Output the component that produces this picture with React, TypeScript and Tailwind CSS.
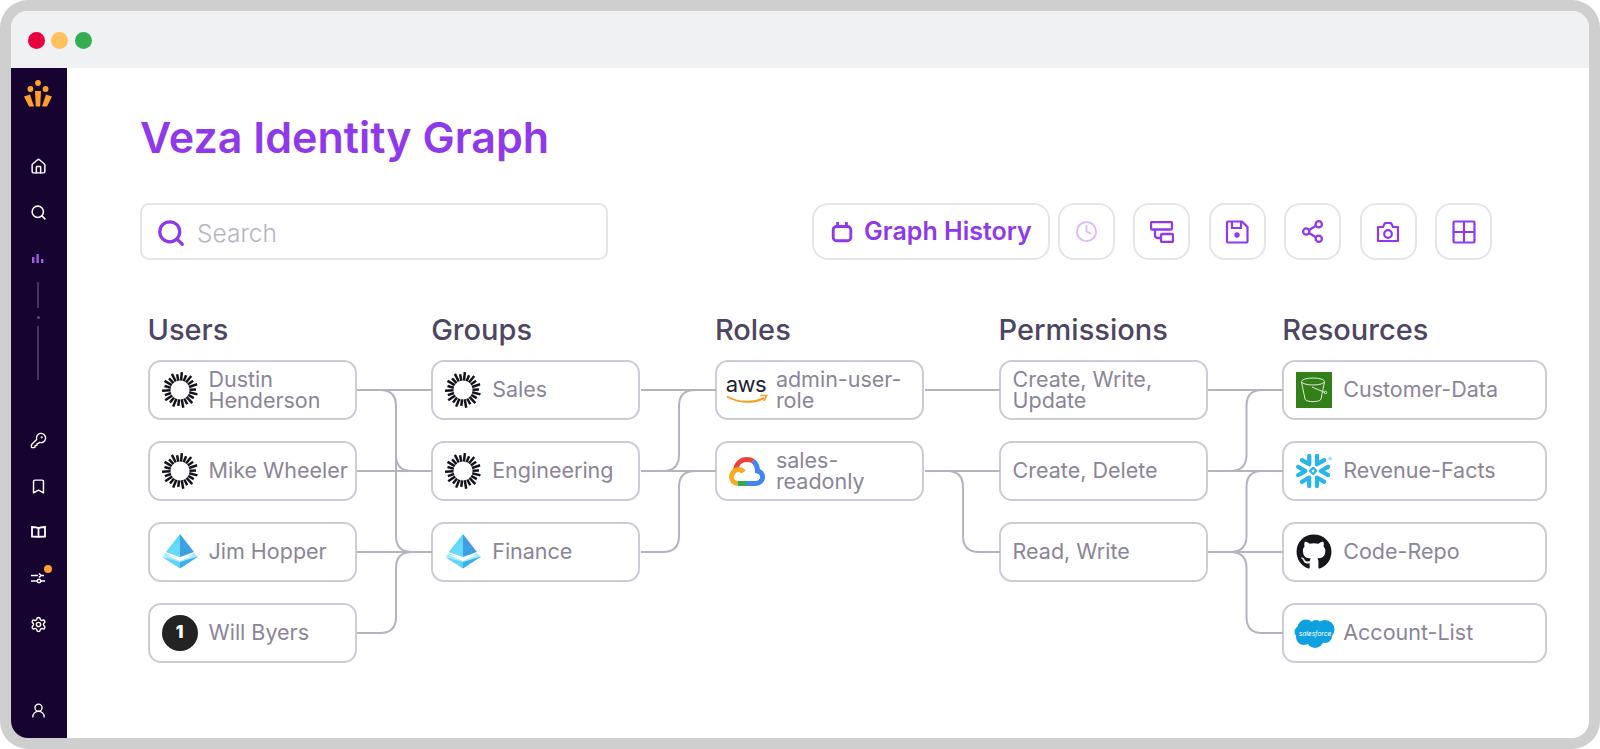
import { ReactNode } from 'react';
import { Search, Clock, Share2, House, KeyRound, Bookmark, Settings, UserRound } from 'lucide-react';
import { FaGithub } from 'react-icons/fa';
import { SiSnowflake } from 'react-icons/si';

function Sunburst() {
    const rays = Array.from({ length: 22 }, (_, i) => i);
    return (
        <svg viewBox="0 0 36 36" className="w-[36px] h-[36px]">
            {rays.map((i) => (
                <line
                    key={i}
                    x1="18"
                    y1={i % 2 === 0 ? 0 : 2}
                    x2="18"
                    y2="8.5"
                    stroke="#15131a"
                    strokeWidth="2.5"
                    transform={`rotate(${(i * 360) / 22 + 6} 18 18)`}
                />
            ))}
        </svg>
    );
}

function AzureLogo() {
    return (
        <svg viewBox="0 0 38 36" className="w-[38px] h-[36px] -mx-px">
            <polygon points="19,0 19,23 5,18" fill="#55d7fb" />
            <polygon points="19,0 33,18 19,23" fill="#3f9fe3" />
            <polygon points="19,23 5,18 11,12 19,7" fill="#6fdcfb" opacity="0.7" />
            <polygon points="2,22 5,19 19,27 33,19 37,23 19,34" fill="#a5e9fc" />
            <polygon points="19,28 37,22.5 19,34.5" fill="#38b0ec" />
            <polygon points="1,23 19,28 19,34.5" fill="#62d2f8" />
            <polygon points="5,21 19,27 33,21 19,24.5" fill="#ffffff" opacity="0.9" />
        </svg>
    );
}

function OnePassword() {
    return (
        <div className="w-[36px] h-[36px] rounded-full bg-[#222322] flex items-center justify-center text-white text-[17px] font-black">
            1
        </div>
    );
}

function AwsLogo() {
    return (
        <svg viewBox="0 0 40 30" className="w-[40px] h-[30px] -mx-[2px] overflow-visible">
            <text x="19" y="17" textAnchor="middle" fontSize="22" fontWeight="400" fill="#221f33" letterSpacing="-0.5">aws</text>
            <path d="M0 21.5 C11 28 27 28.5 37 23" fill="none" stroke="#f59e22" strokeWidth="2" />
            <path d="M33.5 20.5 L39.5 20.5 L37 26" fill="none" stroke="#f59e22" strokeWidth="1.7" />
        </svg>
    );
}

function GoogleCloud() {
    return (
        <svg viewBox="0 0 36 29" fill="none" strokeWidth="5" className="w-[36px] h-[29px]">
            <path d="M24 4 C27 6.5 28.6 10 28.5 14 C31.5 14.5 33.6 17 33.6 20 C33.6 23.5 30.5 26.5 27 26.5 H18" stroke="#4285f4" />
            <path d="M6.5 13 C7.5 6.5 12 2.5 18 2.5 C20.5 2.5 22.5 3 24 4" stroke="#e9433a" />
            <path d="M8.5 26.5 H18" stroke="#34a853" />
            <path d="M9 26.5 C5 26.5 2.5 23.5 2.5 19.8 C2.5 15.5 6 12.6 9.5 12.6 C11.5 12.6 13.4 13.6 14.5 15.2" stroke="#fba91e" />
        </svg>
    );
}

function S3Logo() {
    return (
        <svg viewBox="0 0 36 36" className="w-[36px] h-[36px]">
            <rect width="36" height="36" fill="#33801a" />
            <g fill="none" stroke="#dcebd3" strokeWidth="1">
                <ellipse cx="17" cy="9.5" rx="11.5" ry="3.5" />
                <path d="M5.5 10 L9 27 C9.5 30.5 24.5 30.5 25 27 L28.5 10" />
                <path d="M16 15 L29 20.5" />
                <circle cx="29.5" cy="20.5" r="1.2" />
            </g>
        </svg>
    );
}

function SalesforceLogo() {
    return (
        <svg viewBox="0 0 41 30" className="w-[41px] h-[30px] -mx-[3px]">
            <g fill="#0ea1e0">
                <circle cx="12" cy="10" r="8.5" />
                <circle cx="22" cy="8.5" r="6.5" />
                <circle cx="31" cy="11.5" r="9.5" />
                <circle cx="10" cy="19" r="8" />
                <circle cx="21" cy="21.5" r="8.5" />
                <circle cx="31" cy="18" r="7" />
                <circle cx="7" cy="14" r="6.5" />
            </g>
            <text x="21" y="17.5" textAnchor="middle" fontSize="6.6" fontStyle="italic" fill="#ffffff">salesforce</text>
        </svg>
    );
}

type Item = { label: string; icon?: ReactNode };

const columns: { title: string; items: Item[] }[] = [
    {
        title: 'Users',
        items: [
            { label: 'Dustin Henderson', icon: <Sunburst /> },
            { label: 'Mike Wheeler', icon: <Sunburst /> },
            { label: 'Jim Hopper', icon: <AzureLogo /> },
            { label: 'Will Byers', icon: <OnePassword /> },
        ],
    },
    {
        title: 'Groups',
        items: [
            { label: 'Sales', icon: <Sunburst /> },
            { label: 'Engineering', icon: <Sunburst /> },
            { label: 'Finance', icon: <AzureLogo /> },
        ],
    },
    {
        title: 'Roles',
        items: [
            { label: 'admin-user-role', icon: <AwsLogo /> },
            { label: 'sales-readonly', icon: <GoogleCloud /> },
        ],
    },
    {
        title: 'Permissions',
        items: [{ label: 'Create, Write, Update' }, { label: 'Create, Delete' }, { label: 'Read, Write' }],
    },
    {
        title: 'Resources',
        items: [
            { label: 'Customer-Data', icon: <S3Logo /> },
            { label: 'Revenue-Facts', icon: <SiSnowflake size={36} color="#29b5e8" /> },
            { label: 'Code-Repo', icon: <FaGithub size={36} color="#17151a" /> },
            { label: 'Account-List', icon: <SalesforceLogo /> },
        ],
    },
];

// Connector lines, in the coordinates of the card grid
const links = [
    'M209 30 H284',
    'M209 30 H232 Q248 30 248 46 V95 Q248 111 264 111 H284',
    'M248 95 V176 Q248 192 264 192 H284',
    'M209 111 H284',
    'M209 192 H284',
    'M209 273 H232 Q248 273 248 257 V208 Q248 192 264 192',
    'M493 30 H568',
    'M493 111 H568',
    'M493 111 H515 Q531 111 531 95 V46 Q531 30 547 30',
    'M493 192 H515 Q531 192 531 176 V127 Q531 111 547 111',
    'M777 30 H852',
    'M777 111 H852',
    'M777 111 H799 Q815 111 815 127 V176 Q815 192 831 192 H852',
    'M1060 30 H1135',
    'M1060 111 H1135',
    'M1060 192 H1135',
    'M1060 111 H1082 Q1098.5 111 1098.5 95 V46 Q1098.5 30 1114 30',
    'M1060 192 H1082 Q1098.5 192 1098.5 176 V127 Q1098.5 111 1114 111',
    'M1082 192 Q1098.5 192 1098.5 208 V257 Q1098.5 273 1114 273 H1135',
];

function Card({ label, icon }: Item) {
    return (
        <div className="h-[60px] w-full flex items-center gap-[11px] pl-[12px] bg-white border-2 border-[#cdcbd5] rounded-[13px]">
            {icon && <div className="shrink-0 flex items-center justify-center w-[36px]">{icon}</div>}
            <span className="text-[21.5px] leading-[21.5px] text-[#8b8598]">{label}</span>
        </div>
    );
}

function ToolButton({ children }: { children: ReactNode }) {
    return (
        <button className="w-[57px] h-[57px] flex items-center justify-center border-2 border-[#e6e5ea] rounded-[16px] text-[#9039ea]">
            {children}
        </button>
    );
}

function NavItem({ children }: { children: ReactNode }) {
    return <div className="h-[46px] w-full flex items-center justify-center text-white relative">{children}</div>;
}

export default function App() {
    return (
        <div className="w-[1600px] h-[749px] bg-white overflow-hidden font-[Inter,sans-serif]">
            <div className="w-full h-full bg-[#cfcfcf] rounded-[28px] p-[11px]">
                <div className="w-full h-full bg-white rounded-[17px] overflow-hidden flex flex-col">
                    {/* Title bar */}
                    <div className="h-[57px] shrink-0 bg-[#f0f1f3] flex items-center gap-[6.3px] pl-[17px] pt-px">
                        <div className="w-[17px] h-[17px] rounded-full bg-[#e6023f]" />
                        <div className="w-[17px] h-[17px] rounded-full bg-[#ffc15c]" />
                        <div className="w-[17px] h-[17px] rounded-full bg-[#36ad55]" />
                    </div>

                    <div className="flex flex-1 min-h-0">
                        {/* Sidebar */}
                        <div className="w-[56px] shrink-0 bg-[#170330] flex flex-col items-center pt-[12px] pb-[5px] pr-[2px]">
                            <svg viewBox="0 0 28 27" className="w-[28px] h-[27px] mb-[36px]" fill="#ff9f2e">
                                <circle cx="14" cy="3" r="2.9" />
                                <circle cx="6.4" cy="9" r="2.9" />
                                <circle cx="21.6" cy="9" r="2.9" />
                                <polygon points="11,11 17,11 16.2,26.5 11.8,26.5" />
                                <polygon points="0,16.5 6,14.5 10,26.5 5,26.5" />
                                <polygon points="28,16.5 22,14.5 18,26.5 23,26.5" />
                            </svg>
                            <NavItem><House size={17} strokeWidth={2.1} /></NavItem>
                            <NavItem><Search size={17} strokeWidth={2.2} /></NavItem>
                            <NavItem>
                                <svg viewBox="0 0 12 9" className="w-[12px] h-[9px]" fill="#9a5fe0">
                                    <rect x="0" y="3" width="2.4" height="6" />
                                    <rect x="4.5" y="0" width="2.4" height="9" />
                                    <rect x="9" y="5" width="2.4" height="4" />
                                </svg>
                            </NavItem>
                            <div className="w-[2px] h-[26px] bg-[#453558] mt-px" />
                            <div className="w-[3px] h-[3px] rounded-full bg-[#5b4c70] mt-[8px]" />
                            <div className="w-[2px] h-[54px] bg-[#453558] mt-[7px]" />
                            <div className="h-[37px] shrink-0" />
                            <NavItem><KeyRound size={17} strokeWidth={2} /></NavItem>
                            <NavItem><Bookmark size={17} strokeWidth={2.1} /></NavItem>
                            <NavItem>
                                <svg viewBox="0 0 15 12" className="w-[15px] h-[12px]" fill="none" stroke="currentColor" strokeWidth="1.8">
                                    <path d="M7.5 2.5 C6 1 3 1 1 1 V10.5 C3 10.5 6 10.5 7.5 11 C9 10.5 12 10.5 14 10.5 V1 C12 1 9 1 7.5 2.5 V11" />
                                </svg>
                            </NavItem>
                            <NavItem>
                                <svg viewBox="0 0 14 12" className="w-[14px] h-[12px]" fill="none" stroke="currentColor" strokeWidth="1.5">
                                    <path d="M0 3.5 H7 M13 3.5 H10 L8 1.5 M8 5.5 L10 3.5 M0 9 H6 M10 9 H14" />
                                    <circle cx="8" cy="9" r="1.7" />
                                </svg>
                                <div className="absolute left-[33px] top-[10px] w-[8px] h-[8px] rounded-full bg-[#ff9f2e]" />
                            </NavItem>
                            <NavItem><Settings size={17} strokeWidth={2} /></NavItem>
                            <div className="mt-auto w-full">
                                <NavItem><UserRound size={17} strokeWidth={1.9} /></NavItem>
                            </div>
                        </div>

                        {/* Main */}
                        <div className="flex-1 pt-[44px] pl-[73px]">
                            <h1 className="text-[43px] leading-[50px] font-semibold text-[#9039ea]">Veza Identity Graph</h1>

                            <div className="mt-[41px] w-[1352px] flex items-center justify-between">
                                <div className="w-[468px] h-[57px] flex items-center gap-[11px] pl-[14px] pt-[3px] border-2 border-[#e6e5ea] rounded-[9px]">
                                    <Search size={30} strokeWidth={2.6} className="text-[#9039ea]" />
                                    <span className="text-[24.5px] font-light text-[#b7b4bf]">Search</span>
                                </div>
                                <div className="flex items-center">
                                    <button className="h-[57px] w-[238px] flex items-center gap-[11px] pl-[17px] border-2 border-[#e6e5ea] rounded-[16px] text-[#9039ea] mr-[8px]">
                                        <svg viewBox="0 0 20 20" className="w-[22px] h-[22px]" fill="none" stroke="currentColor" strokeWidth="2.6">
                                            <rect x="2" y="5" width="16" height="13" rx="3" />
                                            <path d="M6 1 V5 M14 1 V5" />
                                        </svg>
                                        <span className="text-[25px] font-semibold">Graph History</span>
                                    </button>
                                    <div className="flex items-center gap-[18.4px]">
                                        <ToolButton><Clock size={23} strokeWidth={2} className="text-[#dcbdfb]" /></ToolButton>
                                        <ToolButton>
                                            <svg viewBox="0 0 24 22" className="w-[24px] h-[22px]" fill="none" stroke="currentColor" strokeWidth="2.3">
                                                <rect x="1" y="1" width="21" height="7.5" rx="1.2" />
                                                <rect x="11" y="13" width="12" height="8" rx="1.2" />
                                                <path d="M5 8.5 V14 Q5 17 8 17 H11" />
                                            </svg>
                                        </ToolButton>
                                        <ToolButton>
                                            <svg viewBox="0 0 24 24" className="w-[24px] h-[24px]" fill="none" stroke="currentColor" strokeWidth="2.2">
                                                <path d="M3 1.5 H17 L22.5 7 V21.5 A1 1 0 0 1 21.5 22.5 H3 A1 1 0 0 1 2 21.5 V2.5 A1 1 0 0 1 3 1.5 Z" />
                                                <path d="M7 1.5 V8 H16 V1.5" />
                                                <circle cx="12" cy="15" r="2.7" fill="currentColor" stroke="none" />
                                            </svg>
                                        </ToolButton>
                                        <ToolButton><Share2 size={25} strokeWidth={2.2} /></ToolButton>
                                        <ToolButton>
                                            <svg viewBox="0 0 24 24" className="w-[24px] h-[24px]" fill="none" stroke="currentColor" strokeWidth="2.2">
                                                <path d="M2 7 H7 L9 3 H15 L17 7 H22 V21 H2 Z" strokeLinejoin="round" />
                                                <circle cx="12" cy="14" r="3.8" />
                                            </svg>
                                        </ToolButton>
                                        <ToolButton>
                                            <svg viewBox="0 0 24 24" className="w-[24px] h-[24px]" fill="none" stroke="currentColor" strokeWidth="2.2">
                                                <rect x="1.5" y="1.5" width="21" height="21" rx="1" />
                                                <path d="M12 1.5 V22.5 M1.5 12 H22.5" />
                                            </svg>
                                        </ToolButton>
                                    </div>
                                </div>
                            </div>

                            {/* Graph */}
                            <div className="relative mt-[53px] ml-[7.5px] w-[1400px] grid grid-cols-[repeat(4,209px)_265px] gap-x-[74.7px]">
                                {columns.map((col) => (
                                    <div key={col.title} className="flex flex-col">
                                        <h2 className="h-[34px] mb-[13px] text-[29px] leading-[34px] font-medium text-[#4e4562]">{col.title}</h2>
                                        <div className="flex flex-col gap-[21px]">
                                            {col.items.map((item) => (
                                                <Card key={item.label} {...item} />
                                            ))}
                                        </div>
                                    </div>
                                ))}
                                <svg className="absolute left-0 top-[47px] w-[1400px] h-[302px]" fill="none" stroke="#b6b3be" strokeWidth="2">
                                    {links.map((d) => (
                                        <path key={d} d={d} />
                                    ))}
                                </svg>
                            </div>
                        </div>
                    </div>
                </div>
            </div>
        </div>
    );
}
